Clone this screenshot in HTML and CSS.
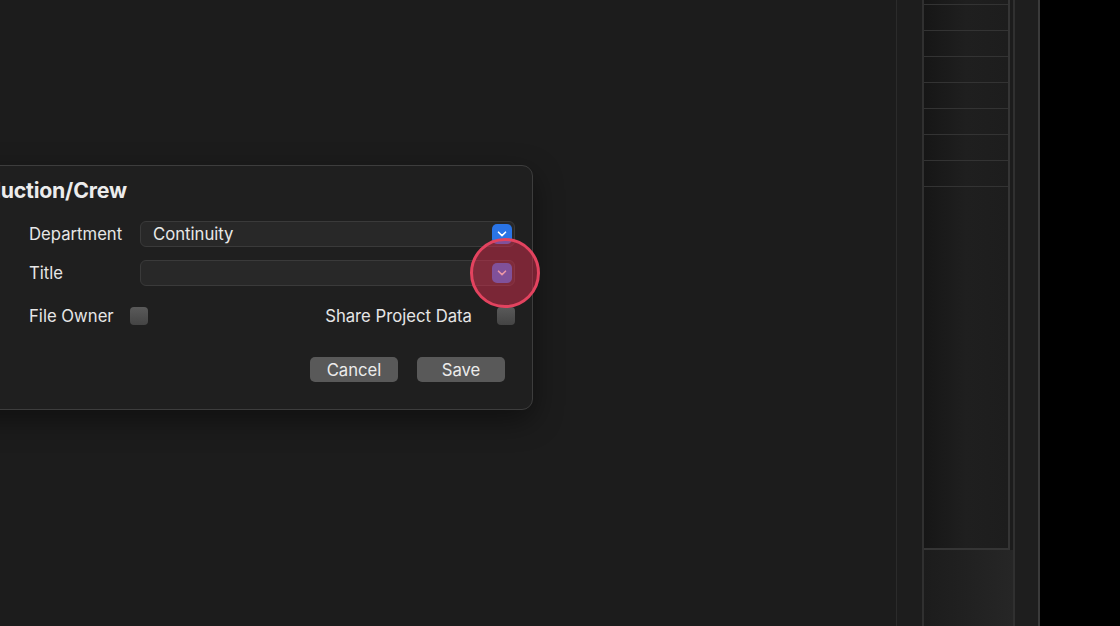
FILE: index.html
```html
<!DOCTYPE html>
<html lang="en">
<head>
    <meta charset="UTF-8">
    <meta name="viewport" content="width=device-width, initial-scale=1.0">
    <title>Production/Crew</title>
    <link rel="stylesheet" href="styles.css">
</head>
<body>
    <div class="workspace">
        <div class="dialog">
            <h2 class="dialog-title">Production/Crew</h2>

            <div class="form-row">
                <label class="label">Department</label>
                <div class="popup">
                    <span class="popup-value">Continuity</span>
                    <span class="popup-btn">
                        <svg width="10" height="6" viewBox="0 0 10 6"><path d="M1.5 1.2 L5 4.6 L8.5 1.2" fill="none" stroke="#fff" stroke-width="1.6" stroke-linecap="round" stroke-linejoin="round"/></svg>
                    </span>
                </div>
            </div>

            <div class="form-row">
                <label class="label">Title</label>
                <div class="popup">
                    <span class="popup-value"></span>
                    <span class="popup-btn">
                        <svg width="10" height="6" viewBox="0 0 10 6"><path d="M1.5 1.2 L5 4.6 L8.5 1.2" fill="none" stroke="#fff" stroke-width="1.6" stroke-linecap="round" stroke-linejoin="round"/></svg>
                        <span class="highlight-ring"></span>
                    </span>
                </div>
            </div>

            <div class="check-row">
                <div class="check-group">
                    <span class="label">File Owner</span>
                    <span class="checkbox"></span>
                </div>
                <div class="check-group">
                    <span class="label">Share Project Data</span>
                    <span class="checkbox"></span>
                </div>
            </div>

            <div class="actions">
                <button class="btn">Cancel</button>
                <button class="btn">Save</button>
            </div>
        </div>
    </div>

    <div class="side-col side-a"></div>
    <div class="side-col side-b">
        <div class="grid-box">
            <div class="grid-row first"></div>
            <div class="grid-row"></div>
            <div class="grid-row"></div>
            <div class="grid-row"></div>
            <div class="grid-row"></div>
            <div class="grid-row"></div>
            <div class="grid-row"></div>
            <div class="grid-row"></div>
        </div>
        <div class="grid-foot"></div>
    </div>
    <div class="side-col side-c"></div>
    <div class="outside"></div>
</body>
</html>
```

FILE: styles.css
```css
html, body {
    margin: 0;
    height: 100%;
}
body {
    display: flex;
    width: 1120px;
    height: 626px;
    overflow: hidden;
    background-color: #1c1c1c;
    font-family: Inter, "Liberation Sans", sans-serif;
    color: #e6e6e6;
}
.workspace {
    width: 896px;
    flex-shrink: 0;
    overflow: hidden;
}
.dialog {
    margin-top: 165px;
    margin-left: -160px;
    width: 693px;
    height: 245px;
    box-sizing: border-box;
    padding: 10px 17px 0 188px;
    background-color: #1f1f1f;
    border: 1px solid #3d3d3d;
    border-radius: 11px;
    box-shadow: 0 10px 30px rgba(0,0,0,0.45);
}
.dialog-title {
    margin: 0 0 17px -188px;
    padding-left: 112px;
    font-size: 21.3px;
    font-weight: 700;
    color: #ececec;
    letter-spacing: -0.2px;
    line-height: 28px;
}
.form-row {
    display: flex;
    align-items: center;
    margin-bottom: 13px;
}
.label {
    width: 111px;
    font-size: 16.7px;
    color: #e6e6e6;
}
.popup {
    flex: 1;
    height: 26px;
    box-sizing: border-box;
    display: flex;
    align-items: center;
    justify-content: space-between;
    padding: 0 0 0 12px;
    background-color: #282828;
    border: 1px solid #3a3a3a;
    border-radius: 6px;
}
.popup-value {
    font-size: 16.7px;
    color: #e8e8e8;
}
.popup-btn {
    position: relative;
    width: 20px;
    height: 20px;
    margin-right: 2px;
    border-radius: 5px;
    background-color: #2a74e6;
    display: flex;
    align-items: center;
    justify-content: center;
}
.highlight-ring {
    position: absolute;
    left: -22px;
    top: -25px;
    width: 64px;
    height: 64px;
    border: 3px solid #e3435f;
    border-radius: 50%;
    background-color: rgba(214, 46, 78, 0.5);
}
.check-row {
    display: flex;
    justify-content: space-between;
    align-items: center;
    margin-top: 20px;
}
.check-group {
    display: flex;
    align-items: center;
}
.check-group .label {
    width: auto;
    margin-right: 16px;
}
.check-group:last-child .label {
    margin-right: 25px;
}
.checkbox {
    width: 18px;
    height: 18px;
    border-radius: 4px;
    background: linear-gradient(#5a5a5a, #444);
}
.actions {
    display: flex;
    justify-content: flex-end;
    gap: 19px;
    margin-top: 31px;
    padding-right: 10px;
}
.btn {
    width: 88px;
    height: 25px;
    border: none;
    border-radius: 5px;
    background-color: #595959;
    color: #ececec;
    font-family: inherit;
    font-size: 16.7px;
    padding: 0;
}
.side-col {
    flex-shrink: 0;
    height: 100%;
    box-sizing: border-box;
}
.side-a {
    width: 26px;
    border-left: 1px solid #2b2b2b;
    background-color: #1d1d1d;
}
.side-b {
    width: 91px;
    border-left: 2px solid #303030;
    display: flex;
    flex-direction: column;
}
.grid-box {
    width: 86px;
    height: 550px;
    box-sizing: border-box;
    border-right: 2px solid #353535;
    border-bottom: 2px solid #353535;
    background: linear-gradient(90deg, #161616, #1f1f1f 50%, #1d1d1d);
}
.grid-row {
    height: 25px;
    border-bottom: 1px solid #333;
}
.grid-row.first {
    height: 4px;
}
.grid-foot {
    flex: 1;
    background: linear-gradient(90deg, #1c1c1c, #262626);
}
.side-c {
    width: 27px;
    border-left: 2px solid #303030;
    border-right: 2px solid #3a3a3a;
    background-color: #1e1e1e;
}
.outside {
    flex: 1;
    background-color: #000;
}
```
